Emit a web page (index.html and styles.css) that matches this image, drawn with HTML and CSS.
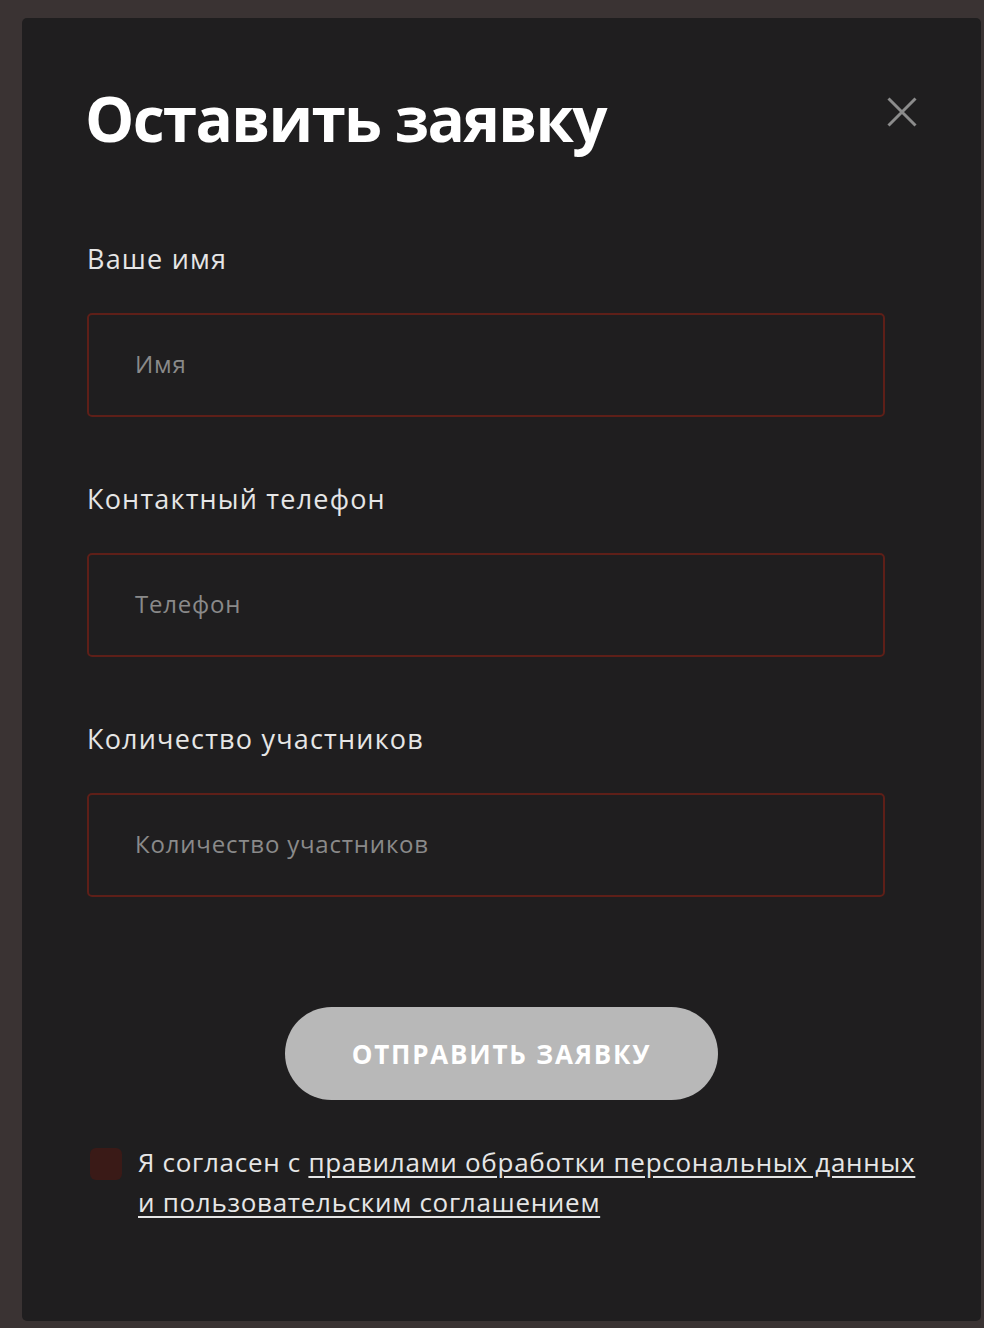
FILE: index.html
```html
<!DOCTYPE html>
<html lang="ru">
<head>
<meta charset="utf-8">
<link rel="stylesheet" href="styles.css">
</head>
<body>
<div class="modal">
  <div class="head">
    <h1 class="title">Оставить заявку</h1>
    <button class="close" aria-label="Закрыть">
      <svg width="30" height="30" viewBox="0 0 30 30"><path d="M1.5 1.5 L28.5 28.5 M28.5 1.5 L1.5 28.5" stroke="#8c8c8c" stroke-width="3" fill="none"/></svg>
    </button>
  </div>
  <form class="form">
    <div class="field">
      <label class="label">Ваше имя</label>
      <div class="input">Имя</div>
    </div>
    <div class="field">
      <label class="label">Контактный телефон</label>
      <div class="input">Телефон</div>
    </div>
    <div class="field">
      <label class="label">Количество участников</label>
      <div class="input">Количество участников</div>
    </div>
    <div class="actions">
      <button class="submit" type="button">Отправить заявку</button>
    </div>
    <div class="agree">
      <span class="check"></span>
      <p class="agree-text"><span>Я согласен с </span><a href="#">правилами обработки персональных данных и пользовательским соглашением</a></p>
    </div>
  </form>
</div>
</body>
</html>
```
FILE: styles.css
```css
html, body {
  margin: 0;
  padding: 0;
}
body {
  background: #3a3333;
  width: 984px;
  height: 1328px;
  overflow: hidden;
  font-family: "Open Sans", "Noto Sans", sans-serif;
}
.modal {
  box-sizing: border-box;
  margin: 18px 3px 0 22px;
  height: 1303px;
  background: #1f1e1f;
  border-radius: 5px;
  padding: 64px 96px 0 65px;
}
.head {
  display: flex;
  justify-content: space-between;
  align-items: flex-start;
}
.title {
  margin: 0 0 0 -2px;
  color: #ffffff;
  font-family: "Open Sans", sans-serif;
  font-weight: 700;
  font-size: 62px;
  letter-spacing: -1.7px;
  line-height: 72px;
}
.close {
  margin: 15px -32px 0 0;
  padding: 0;
  border: 0;
  background: none;
  width: 30px;
  height: 30px;
  display: flex;
}
.form {
  margin-top: 85px;
  display: flex;
  flex-direction: column;
}
.field {
  display: flex;
  flex-direction: column;
  gap: 34px;
  margin-bottom: 62px;
}
.label {
  color: #e6e6e6;
  font-size: 27px;
  letter-spacing: 1.2px;
  line-height: 40px;
}
.input {
  box-sizing: border-box;
  height: 104px;
  border: 2px solid #5e1f18;
  border-radius: 5px;
  padding: 0 46px 3px;
  display: flex;
  align-items: center;
  color: #8a8a8a;
  font-size: 24px;
  letter-spacing: 0.8px;
}
.actions {
  display: flex;
  justify-content: center;
  margin: 48px -96px 0 -65px;
}
.submit {
  width: 433px;
  height: 93px;
  border: 0;
  border-radius: 47px;
  background: #b8b8b8;
  color: #ffffff;
  font-family: "Open Sans", sans-serif;
  font-weight: 700;
  font-size: 26px;
  letter-spacing: 1.8px;
  text-transform: uppercase;
}
.agree {
  display: flex;
  gap: 16px;
  margin-top: 42px;
  margin-right: -33px;
}
.check {
  flex: none;
  width: 32px;
  height: 32px;
  margin: 6px 0 0 3px;
  border-radius: 6px;
  background: #3a1a17;
}
.agree-text {
  margin: 0;
  color: #e6e6e6;
  font-size: 26px;
  letter-spacing: 0.7px;
  line-height: 40px;
}
.agree-text a {
  color: #e6e6e6;
  text-decoration: underline;
  text-underline-offset: 4px;
}
```
